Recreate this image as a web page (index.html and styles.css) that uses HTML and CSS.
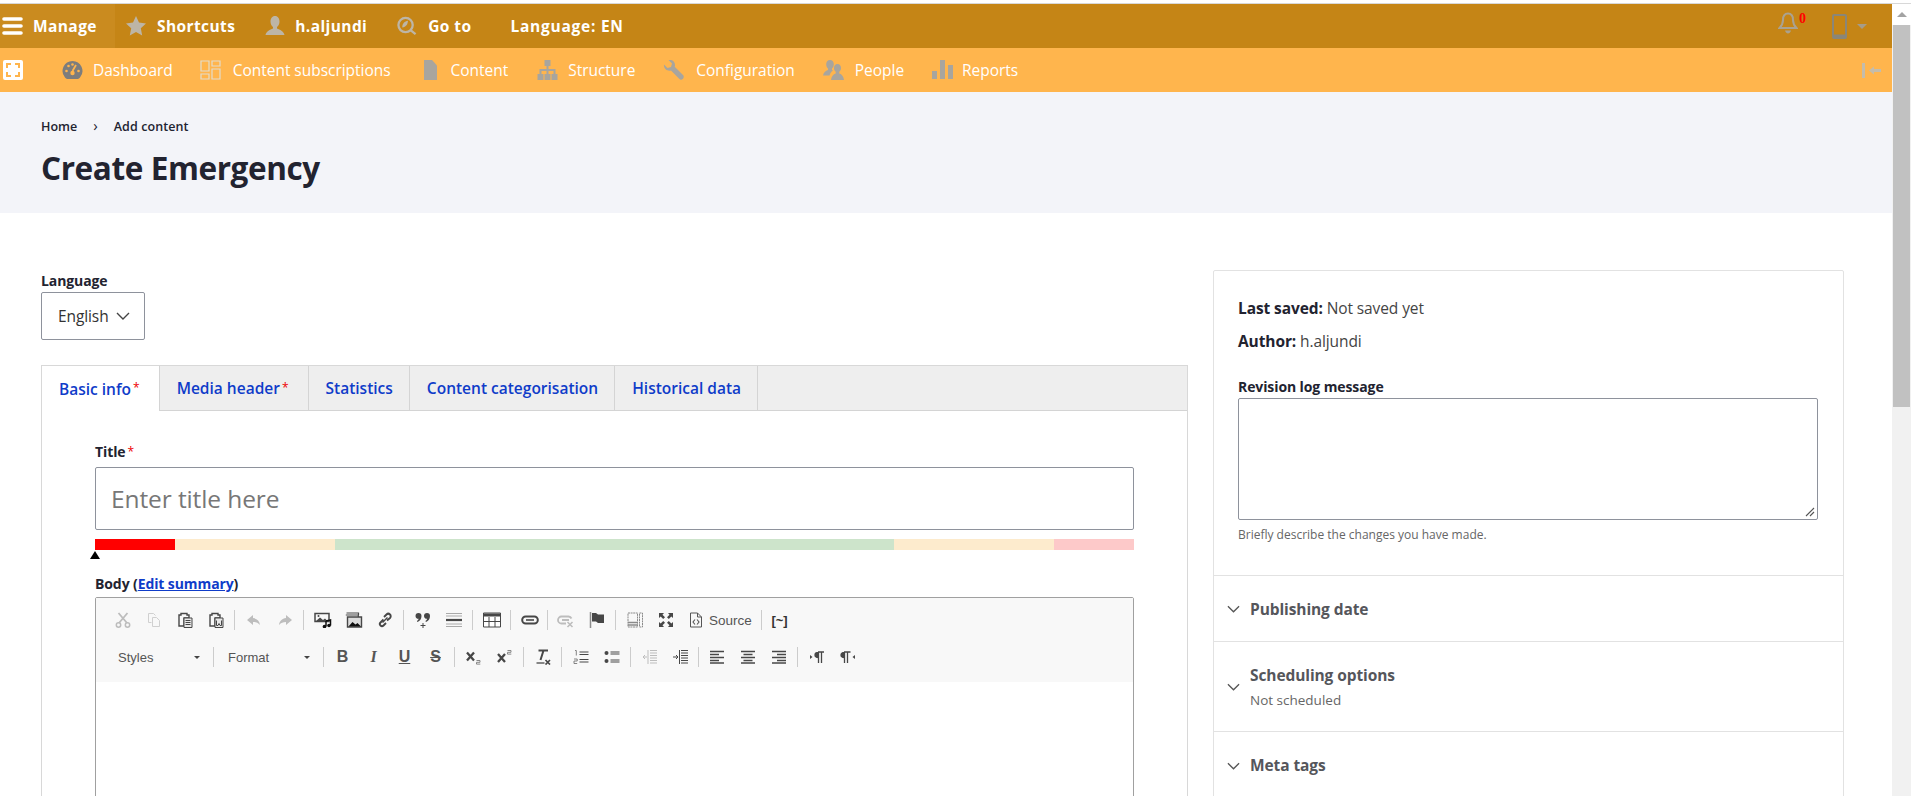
FILE: index.html
```html
<!DOCTYPE html>
<html lang="en">
<head>
<meta charset="utf-8">
<title>Create Emergency</title>
<link rel="stylesheet" href="styles.css">
</head>
<body>
<svg class="sprite" xmlns="http://www.w3.org/2000/svg">
  <symbol id="i-cut" viewBox="0 0 16 16"><path d="M3.5 1 12 11M12.500 1 4 11" fill="none" stroke="currentColor" stroke-width="1.800"/><circle cx="3.500" cy="13" r="2.200" fill="none" stroke="currentColor" stroke-width="1.500"/><circle cx="12.500" cy="13" r="2.200" fill="none" stroke="currentColor" stroke-width="1.500"/></symbol>
  <symbol id="i-copy" viewBox="0 0 16 16"><path d="M2.500 1.500h5l2 2M2.500 1.500v9h3M6.500 5.500h4l3 3v6h-7z" fill="none" stroke="currentColor" stroke-width="1"/></symbol>
  <symbol id="i-paste" viewBox="0 0 16 16"><path d="M2 3h2V1.500h6V3h2v3H7v8H2z" fill="none" stroke="currentColor" stroke-width="1.400"/><path d="M7 6h8v9.500H7z" fill="#e8e8e8" stroke="currentColor" stroke-width="1"/><path d="M8.500 8.500h5M8.500 10.500h5M8.500 12.500h5" stroke="currentColor" stroke-width="1"/></symbol>
  <symbol id="i-word" viewBox="0 0 16 16"><path d="M2 3h2V1.500h6V3h2v3H7v8H2z" fill="none" stroke="currentColor" stroke-width="1.400"/><path d="M7 6h8v9.500H7z" fill="#e8e8e8" stroke="currentColor" stroke-width="1"/><path d="M8.500 8.500v5h1.500l1-2 1 2h1.500v-5" fill="none" stroke="currentColor" stroke-width="1"/></symbol>
  <symbol id="i-undo" viewBox="0 0 16 16"><path d="M7 3 1 8l6 5v-3c3 0 5 .8 7 3-.5-4-3-6.500-7-7z" fill="currentColor"/></symbol>
  <symbol id="i-redo" viewBox="0 0 16 16"><path d="M9 3l6 5-6 5v-3c-3 0-5 .8-7 3 .5-4 3-6.500 7-7z" fill="currentColor"/></symbol>
  <symbol id="i-media" viewBox="0 0 18 16"><path d="M1 1.500h14v8H1z" fill="none" stroke="currentColor" stroke-width="1.500"/><path d="M2 9l4-3.500L9 8l2-1.500 3 3z" fill="currentColor"/><circle cx="4.500" cy="4" r="1" fill="currentColor"/><path d="M12 9v5.500M12 9l4.500-1v5.500" fill="none" stroke="#111" stroke-width="1.500"/><circle cx="10.500" cy="14.500" r="1.800" fill="#111"/><circle cx="15" cy="13.500" r="1.800" fill="#111"/></symbol>
  <symbol id="i-gallery" viewBox="0 0 18 16"><path d="M1.500 1h12v2M.8 3h12.500v2" fill="none" stroke="currentColor" stroke-width="1.200"/><path d="M2.500 5h14v10h-14z" fill="#ddd" stroke="currentColor" stroke-width="1.400"/><path d="M3.500 14.500l4-4.500 3 2.500 2-1.500 3.500 3.500z" fill="#111"/></symbol>
  <symbol id="i-chain" viewBox="0 0 16 16"><path d="M6.500 7.500 3.500 10.500a2.100 2.100 0 0 0 3 3L9 11M7 5l2.500-2.500a2.100 2.100 0 0 1 3.500 3.500L10 8.500" fill="none" stroke="currentColor" stroke-width="1.900"/><path d="M5.500 10.500 10.500 5.500" stroke="currentColor" stroke-width="1.500"/></symbol>
  <symbol id="i-quote" viewBox="0 0 16 16"><path d="M.5 4a3 3 0 1 1 6 0c0 3-1.500 5-4 6l-.6-1c1-.6 1.600-1.500 1.700-2.200A3 3 0 0 1 .5 4zM9 4a3 3 0 1 1 6 0c0 3-1.500 5-4 6l-.6-1c1-.6 1.600-1.500 1.700-2.200A3 3 0 0 1 9 4z" fill="currentColor"/><path d="M8 11v5M5.500 13.500h5" stroke="currentColor" stroke-width="1"/></symbol>
  <symbol id="i-hr" viewBox="0 0 16 16"><path d="M0 1.500h16M0 4h16M0 12h16M0 14.500h16" stroke="#aaa" stroke-width="1.200"/><path d="M0 8h16" stroke="currentColor" stroke-width="2.200"/></symbol>
  <symbol id="i-table" viewBox="0 0 18 16"><path d="M.5 1h17v14H.5z" fill="#fff" stroke="currentColor" stroke-width="1"/><path d="M.5 1.500h17v3H.5z" fill="currentColor"/><path d="M.5 9.500h17M6 5v10M12 5v10" stroke="currentColor" stroke-width="1"/></symbol>
  <symbol id="i-link" viewBox="0 0 18 16"><rect x="1.200" y="4.500" width="15.600" height="7" rx="3.500" fill="none" stroke="currentColor" stroke-width="2"/><path d="M5 8h8" stroke="currentColor" stroke-width="1.600"/></symbol>
  <symbol id="i-unlink" viewBox="0 0 18 16"><path d="M9 11.500H4.500a3.500 3.500 0 0 1 0-7h7a3.500 3.500 0 0 1 3 2M5 8h7" fill="none" stroke="currentColor" stroke-width="1.800"/><path d="M10.500 10l5 5M15.500 10l-5 5" stroke="currentColor" stroke-width="1.600"/></symbol>
  <symbol id="i-flag" viewBox="0 0 16 16"><path d="M1.500 0v16" stroke="currentColor" stroke-width="1.500" opacity=".6"/><path d="M3 1h4l2 1.500h6V11H9l-2-1.500H3z" fill="currentColor"/></symbol>
  <symbol id="i-tpl" viewBox="0 0 16 16"><path d="M1 1h9.500v14H1zM12.500 1h3v14h-3z" fill="none" stroke="currentColor" stroke-width="1" stroke-dasharray="2 .6"/><path d="M1 10.500h9.500M1 13h9.500" stroke="currentColor" stroke-width="1.300"/></symbol>
  <symbol id="i-max" viewBox="0 0 16 16"><path d="M1 1h5L4.500 2.700 7 5.200 5.200 7 2.700 4.500 1 6zM15 1v5l-1.700-1.500L10.800 7 9 5.200l2.500-2.500L10 1zM1 15v-5l1.700 1.500L5.200 9 7 10.800l-2.500 2.500L6 15zM15 15h-5l1.500-1.700L9 10.800 10.800 9l2.500 2.500L15 10z" fill="currentColor"/></symbol>
  <symbol id="i-src" viewBox="0 0 16 16"><path d="M2.500 1h7l4 4v10h-11zM9.500 1v4h4" fill="none" stroke="currentColor" stroke-width="1"/><path d="M7 7.500 5 10l2 2.500M9 7.500l2 2.500-2 2.500" fill="none" stroke="currentColor" stroke-width="1.100"/></symbol>
  <symbol id="i-sub" viewBox="0 0 16 16"><path d="M1 3.500l7 8M8 3.500l-7 8" stroke="currentColor" stroke-width="2.300"/><path d="M10.500 11.500h3.500v1.800h-3.500v1.800h3.800" fill="none" stroke="#888" stroke-width="1"/></symbol>
  <symbol id="i-sup" viewBox="0 0 16 16"><path d="M1 5l7 8M8 5l-7 8" stroke="currentColor" stroke-width="2.300"/><path d="M10.500 1.500h3.500v1.800h-3.500v1.800h3.800" fill="none" stroke="#888" stroke-width="1"/></symbol>
  <symbol id="i-clear" viewBox="0 0 16 16"><path d="M3.500 1.500H13M8.500 1.500 5.500 11" stroke="currentColor" stroke-width="2" fill="none"/><path d="M1.500 14h8" stroke="currentColor" stroke-width="1.300"/><path d="M10.500 11l4.500 4.500M15 11l-4.500 4.500" stroke="currentColor" stroke-width="1.700"/></symbol>
  <symbol id="i-ol" viewBox="0 0 16 16"><path d="M6.500 3h9M6.500 5.500h9M6.500 10.500h9M6.500 13h9" stroke="currentColor" stroke-width="1.100"/><path d="M2 1.500h1.300v5M1 10h3.200v2H1v2.500h3.200" fill="none" stroke="#777" stroke-width=".9"/></symbol>
  <symbol id="i-ul" viewBox="0 0 16 16"><circle cx="2.500" cy="4" r="2" fill="currentColor"/><circle cx="2.500" cy="12" r="2" fill="currentColor"/><path d="M6.500 3h9M6.500 5h9M6.500 11h9M6.500 13h9" stroke="currentColor" stroke-width="1"/></symbol>
  <symbol id="i-out" viewBox="0 0 16 16"><path d="M8 1.500h7M8 4h7M8 6.500h7M8 9h7M8 11.500h7M8 14h7" stroke="currentColor" stroke-width="1"/><path d="M6 1v14" stroke="currentColor" stroke-width="1"/><path d="M5 8H1M3 6 1 8l2 2" fill="none" stroke="currentColor" stroke-width="1"/></symbol>
  <symbol id="i-in" viewBox="0 0 16 16"><path d="M8 1.500h7M8 4h7M8 6.500h7M8 9h7M8 11.500h7M8 14h7" stroke="currentColor" stroke-width="1"/><path d="M6.500 1v14" stroke="currentColor" stroke-width="1"/><path d="M0 8h5M3 6l2 2-2 2" fill="none" stroke="currentColor" stroke-width="1"/></symbol>
  <symbol id="i-left" viewBox="0 0 16 16"><path d="M1 2.500h14M1 5.500h9M1 8.500h14M1 11.500h9M1 14h14" stroke="currentColor" stroke-width="1.500"/></symbol>
  <symbol id="i-center" viewBox="0 0 16 16"><path d="M1 2.500h14M3.500 5.500h9M1 8.500h14M3.500 11.500h9M1 14h14" stroke="currentColor" stroke-width="1.500"/></symbol>
  <symbol id="i-right" viewBox="0 0 16 16"><path d="M1 2.500h14M6 5.500h9M1 8.500h14M6 11.500h9M1 14h14" stroke="currentColor" stroke-width="1.500"/></symbol>
  <symbol id="i-ltr" viewBox="0 0 16 16"><path d="M1 6v4l2.500-2z" fill="currentColor"/><path d="M9 3h6M9.500 3.500C7 3.500 6 4.500 6 6s1 2.500 3.500 2.500zM9.500 3v11M12.500 3v11" fill="currentColor" stroke="currentColor" stroke-width="1.300"/></symbol>
  <symbol id="i-rtl" viewBox="0 0 16 16"><path d="M15 6v4l-2.500-2z" fill="currentColor"/><path d="M4 3h6.500M4.500 3.500C2 3.500 1 4.500 1 6s1 2.500 3.500 2.500zM4.500 3v11M7.500 3v11" fill="currentColor" stroke="currentColor" stroke-width="1.300"/></symbol>
  <symbol id="i-chev" viewBox="0 0 14 8"><path d="M1 1l6 6 6-6" fill="none" stroke="currentColor" stroke-width="1.400"/></symbol>
</svg>

<div class="frame">
  <div class="page">
    <nav class="bar bar-top">
      <a class="top-item top-manage">
        <svg class="ico-burger" viewBox="0 0 21 18"><path d="M2 2h17M2 9h17M2 16h17" stroke="#fff" stroke-width="3.600" stroke-linecap="round"/></svg>
        <span>Manage</span>
      </a>
      <a class="top-item top-short">
        <svg class="ico20" viewBox="0 0 20 20"><path d="M10 0l3 6.600 7 .8-5.200 4.800L16.200 19.500 10 16l-6.200 3.500 1.400-7.300L0 7.400l7-.8z" fill="#bdb5a6"/></svg>
        <span>Shortcuts</span>
      </a>
      <a class="top-item top-user">
        <svg class="ico20" viewBox="0 0 20 20"><path d="M10 0c3 0 4.500 2.500 4.500 5.500 0 2.500-1 4.500-2.500 5.500v1.500c3 1 6.500 2.500 7.500 6.500H.5c1-4 4.500-5.500 7.500-6.500V11C6.500 10 5.500 8 5.500 5.500 5.500 2.500 7 0 10 0z" fill="#bdb5a6"/></svg>
        <span>h.aljundi</span>
      </a>
      <a class="top-item top-goto">
        <svg class="ico20" viewBox="0 0 21 20"><circle cx="9" cy="9" r="7.500" fill="none" stroke="#bdb5a6" stroke-width="2.400"/><path d="M5.500 11.500c0-4 2.500-6.500 6-7-.2 4-2 6.500-6 7z" fill="#bdb5a6"/><path d="M14.500 14.500l5 4" stroke="#bdb5a6" stroke-width="2.400"/></svg>
        <span>Go to</span>
      </a>
      <a class="top-item top-lang"><span>Language: EN</span></a>
      <div class="top-right">
        <svg class="ico-bell" viewBox="0 0 20 22"><path d="M10 1.500c-3.500 0-5 2.500-5 6.500 0 4-1.500 6-3.500 8h17c-2-2-3.500-4-3.500-8 0-4-1.500-6.500-5-6.500z" fill="none" stroke="#aaa290" stroke-width="2"/><path d="M7 18.500h6c-.5 2-1.800 3-3 3s-2.500-1-3-3z" fill="#aaa290"/></svg>
        <span class="badge">0</span>
        <svg class="ico-phone" viewBox="0 0 15 25"><rect x="1" y="1" width="13" height="23" rx="1" fill="none" stroke="#8a8678" stroke-width="2"/><rect x="1" y="20.500" width="13" height="4" fill="#8a8678"/></svg>
        <span class="caret-down"></span>
      </div>
    </nav>

    <nav class="bar bar-sub">
      <svg class="ico-home" viewBox="0 0 20 20"><rect width="20" height="20" rx="2" fill="#fff"/><path d="M4 8V4h4M12 4h4v4M16 12v4h-4M8 16H4v-4" fill="none" stroke="#ffb54d" stroke-width="2"/></svg>
      <a class="sub-item sub-dash">
        <svg class="ico-w21" viewBox="0 0 21 20"><path d="M10.500 1a10 10 0 0 0-7.500 16.500c1 1.200 2 1.500 3 1.500h9c1 0 2-.3 3-1.500A10 10 0 0 0 10.500 1z" fill="#7d7d7d"/><path d="M10.500 11 14 5" stroke="#ffb54d" stroke-width="1.800"/><circle cx="10.500" cy="13" r="2.200" fill="#ffb54d"/><circle cx="4.500" cy="11" r="1.300" fill="#ffb54d"/><circle cx="6.500" cy="6" r="1.300" fill="#ffb54d"/><circle cx="10.500" cy="4.500" r="1.300" fill="#ffb54d"/><circle cx="16.500" cy="11" r="1.300" fill="#ffb54d"/></svg>
        <span>Dashboard</span>
      </a>
      <a class="sub-item sub-subs">
        <svg class="ico-w21" viewBox="0 0 21 20"><path d="M1 1h8v10H1zM12 1h8v5h-8zM1 14h8v5H1zM12 9h8v10h-8z" fill="none" stroke="#e3dccb" stroke-width="1.200"/></svg>
        <span>Content subscriptions</span>
      </a>
      <a class="sub-item sub-content">
        <svg class="ico-w13" viewBox="0 0 13 20"><path d="M0 0h8l5 5.500V20H0z" fill="#a8a59e"/></svg>
        <span>Content</span>
      </a>
      <a class="sub-item sub-struct">
        <svg class="ico-w21" viewBox="0 0 21 20"><path d="M7.500 0h6v6h-2v3h7v5h2v6h-6v-6h2v-3h-5v3h2v6h-6v-6h2v-3h-5v3h2v6h-6v-6h2V9h7V6h-2z" fill="#a8a59e"/></svg>
        <span>Structure</span>
      </a>
      <a class="sub-item sub-conf">
        <svg class="ico-w21" viewBox="0 0 21 20"><path d="M1 4.500 4.500 8 8 7l1-3.500L5.500 0C9-.7 12 1.500 12 5c0 .7-.1 1.300-.3 1.800L20 15c1 1 1 2.500 0 3.800-1.200 1.200-2.800 1.200-3.800 0L8 10.500c-3.500 1-7.500-1.500-7-6z" fill="#a8a59e"/></svg>
        <span>Configuration</span>
      </a>
      <a class="sub-item sub-people">
        <svg class="ico-w21" viewBox="0 0 21 20"><path d="M7 0c2.500 0 3.800 2 3.800 4.300 0 1.800-.7 3.300-1.800 4.200v1.500l1 .5c-1.800 1.300-3 3.200-3.500 5H0c.5-3 2.500-4.500 5-5.500V8.500C3.900 7.600 3.200 6.100 3.200 4.300 3.200 2 4.500 0 7 0z" fill="#a8a59e"/><path d="M14.500 4c2.300 0 3.500 2 3.500 4 0 1.700-.7 3-1.700 3.800v1.700c2.500.8 4.200 2.800 4.700 6.500H8c.5-3.700 2.200-5.700 4.700-6.500v-1.700C11.700 11 11 9.700 11 8c0-2 1.200-4 3.500-4z" fill="#a8a59e"/></svg>
        <span>People</span>
      </a>
      <a class="sub-item sub-rep">
        <svg class="ico-w21" viewBox="0 0 21 20"><path d="M0 11h5v8H0zM8 0h5v19H8zM16 5h5v14h-5z" fill="#a8a59e"/></svg>
        <span>Reports</span>
      </a>
      <svg class="ico-collapse" viewBox="0 0 20 15"><rect width="3" height="15" fill="#c4bcab"/><path d="M7 7.500l5-4v2.500h7v3h-7v2.500z" fill="#c4bcab"/></svg>
    </nav>

    <header class="head">
      <ol class="crumbs">
        <li>Home</li>
        <li class="crumb-sep">›</li>
        <li>Add content</li>
      </ol>
      <h1 class="title">Create Emergency</h1>
    </header>

    <main class="layout">
      <section class="col-main">
        <label class="lbl lbl-lang">Language</label>
        <div class="select"><span>English</span><svg class="chev"><use href="#i-chev"/></svg></div>

        <div class="tabs-box">
          <ul class="tabs">
            <li class="tab tab-on">Basic info<b class="req">*</b></li>
            <li class="tab">Media header<b class="req">*</b></li>
            <li class="tab">Statistics</li>
            <li class="tab">Content categorisation</li>
            <li class="tab">Historical data</li>
          </ul>
          <div class="tab-body">
            <label class="lbl">Title<b class="req">*</b></label>
            <div class="title-input">Enter title here</div>
            <div class="meter">
              <i class="m m-red"></i><i class="m m-peach"></i><i class="m m-green"></i><i class="m m-peach"></i><i class="m m-pink"></i>
            </div>
            <div class="meter-mark"></div>
            <label class="lbl lbl-body">Body (<a class="lnk">Edit summary</a>)</label>
            <div class="editor">
              <div class="ed-tools">
                <div class="ed-row">
                  <span class="btn off"><svg><use href="#i-cut"/></svg></span>
                  <span class="btn off2"><svg><use href="#i-copy"/></svg></span>
                  <span class="btn"><svg><use href="#i-paste"/></svg></span>
                  <span class="btn"><svg><use href="#i-word"/></svg></span>
                  <span class="sep"></span>
                  <span class="btn off"><svg><use href="#i-undo"/></svg></span>
                  <span class="btn off"><svg><use href="#i-redo"/></svg></span>
                  <span class="sep"></span>
                  <span class="btn"><svg class="w18"><use href="#i-media"/></svg></span>
                  <span class="btn"><svg class="w18"><use href="#i-gallery"/></svg></span>
                  <span class="btn"><svg><use href="#i-chain"/></svg></span>
                  <span class="sep"></span>
                  <span class="btn"><svg><use href="#i-quote"/></svg></span>
                  <span class="btn"><svg><use href="#i-hr"/></svg></span>
                  <span class="sep"></span>
                  <span class="btn"><svg class="w18"><use href="#i-table"/></svg></span>
                  <span class="sep"></span>
                  <span class="btn"><svg class="w18"><use href="#i-link"/></svg></span>
                  <span class="sep sep-tight"></span>
                  <span class="btn off"><svg class="w18"><use href="#i-unlink"/></svg></span>
                  <span class="btn"><svg><use href="#i-flag"/></svg></span>
                  <span class="sep"></span>
                  <span class="btn btn-muted"><svg><use href="#i-tpl"/></svg></span>
                  <span class="btn"><svg><use href="#i-max"/></svg></span>
                  <span class="btn btn-src"><svg><use href="#i-src"/></svg><em>Source</em></span>
                  <span class="sep"></span>
                  <span class="btn btn-tilde">[~]</span>
                </div>
                <div class="ed-row">
                  <span class="combo"><em>Styles</em><i class="combo-caret"></i></span>
                  <span class="sep"></span>
                  <span class="combo"><em>Format</em><i class="combo-caret"></i></span>
                  <span class="sep"></span>
                  <span class="btn fmt fmt-b">B</span>
                  <span class="btn fmt fmt-i">I</span>
                  <span class="btn fmt fmt-u">U</span>
                  <span class="btn fmt fmt-s">S</span>
                  <span class="sep"></span>
                  <span class="btn"><svg><use href="#i-sub"/></svg></span>
                  <span class="btn"><svg><use href="#i-sup"/></svg></span>
                  <span class="sep"></span>
                  <span class="btn"><svg><use href="#i-clear"/></svg></span>
                  <span class="sep"></span>
                  <span class="btn"><svg><use href="#i-ol"/></svg></span>
                  <span class="btn"><svg><use href="#i-ul"/></svg></span>
                  <span class="sep"></span>
                  <span class="btn off"><svg><use href="#i-out"/></svg></span>
                  <span class="btn"><svg><use href="#i-in"/></svg></span>
                  <span class="sep sep-tight"></span>
                  <span class="btn"><svg><use href="#i-left"/></svg></span>
                  <span class="btn"><svg><use href="#i-center"/></svg></span>
                  <span class="btn"><svg><use href="#i-right"/></svg></span>
                  <span class="sep"></span>
                  <span class="btn"><svg><use href="#i-ltr"/></svg></span>
                  <span class="btn"><svg><use href="#i-rtl"/></svg></span>
                </div>
              </div>
              <div class="ed-area"></div>
            </div>
          </div>
        </div>
      </section>

      <aside class="col-side">
        <div class="side-top">
          <p class="meta"><b>Last saved:</b> Not saved yet</p>
          <p class="meta meta-2"><b>Author:</b> h.aljundi</p>
          <label class="lbl lbl-rev">Revision log message</label>
          <div class="rev-box">
            <svg class="grip" viewBox="0 0 10 10"><path d="M1 9 9 1M5 9l4-4" stroke="#555" stroke-width="1.100"/></svg>
          </div>
          <p class="help">Briefly describe the changes you have made.</p>
        </div>
        <div class="acc acc-1"><svg class="chev chev-acc"><use href="#i-chev"/></svg><div><h3>Publishing date</h3></div></div>
        <div class="acc acc-2"><svg class="chev chev-acc"><use href="#i-chev"/></svg><div><h3>Scheduling options</h3><p>Not scheduled</p></div></div>
        <div class="acc acc-3"><svg class="chev chev-acc"><use href="#i-chev"/></svg><div><h3>Meta tags</h3></div></div>
      </aside>
    </main>
  </div>

  <div class="scroll">
    <div class="scroll-btn"><span class="scroll-up"></span></div>
    <div class="scroll-thumb"></div>
  </div>
</div>
</body>
</html>
```
FILE: styles.css
```css
* { box-sizing: border-box; }
html, body { margin: 0; height: 100%; overflow: hidden; }
body {
  background: #fff;
  font-family: "Open Sans", "Noto Sans", sans-serif;
  color: #222330;
  padding-top: 3px;
}
.sprite { display: none; }
svg { display: block; flex: none; }
ul, ol { list-style: none; margin: 0; padding: 0; }
p, h1, h3 { margin: 0; }
em { font-style: normal; }

.frame { display: flex; height: 793px; border-top: 1px solid #d8d8d8; overflow: hidden; }
.page { flex: 1; min-width: 0; overflow: hidden; }

/* Scrollbar */
.scroll { width: 19px; background: #f1f1f1; display: flex; flex-direction: column; align-items: flex-end; }
.scroll-btn { width: 19px; height: 21px; background: #fff; display: flex; align-items: center; justify-content: center; }
.scroll-up { width: 0; height: 0; border: 5px solid transparent; border-top: 0; border-bottom: 5px solid #a3a3a3; }
.scroll-thumb { width: 17px; margin-right: 1px; height: 382px; background: #c1c1c1; }

/* Admin bars */
.bar { display: flex; align-items: center; height: 44px; position: relative; }
.bar-top { background: #c58516; color: #fff; font-weight: 700; font-size: 15.500px; letter-spacing: .4px; }
.bar-sub { background: #ffb54d; color: #fff; font-size: 15.500px; letter-spacing: -.03px; }
.top-item, .sub-item { display: flex; align-items: center; white-space: nowrap; }
.top-manage { background: #ca8b1f; width: 115px; height: 44px; padding-left: 2px; gap: 10px; }
.ico-burger { width: 21px; height: 18px; }
.ico20 { width: 20px; height: 20px; }
.top-short { margin-left: 11px; gap: 11px; }
.top-user { margin-left: 30px; gap: 10px; }
.top-goto { margin-left: 30px; gap: 11px; }
.top-lang { margin-left: 39px; letter-spacing: .75px; }
.top-right { margin-left: auto; display: flex; align-items: flex-start; height: 44px; padding: 8px 25px 0 0; }
.ico-bell { width: 20px; height: 22px; }
.badge { font-family: "Liberation Serif", serif; font-weight: 700; font-size: 14px; line-height: 14px; color: #f00; margin-left: 1px; width: 9px; letter-spacing: 0; }
.ico-phone { width: 15px; height: 25px; margin: 2px 0 0 24px; }
.caret-down { width: 0; height: 0; margin: 12px 0 0 10px; border: 5px solid transparent; border-bottom: 0; border-top: 5px solid #a59c8a; }

.ico-home { width: 20px; height: 20px; margin-left: 3px; }
.ico-w21 { width: 21px; height: 20px; }
.ico-w13 { width: 13px; height: 20px; }
.sub-item { gap: 10px; }
.sub-dash { margin-left: 39px; }
.sub-subs { margin-left: 27px; gap: 12px; }
.sub-content { margin-left: 33px; gap: 14px; }
.sub-struct { margin-left: 29px; }
.sub-conf { margin-left: 28px; gap: 12px; }
.sub-people { margin-left: 28px; gap: 11px; }
.sub-rep { margin-left: 28px; gap: 9px; }
.ico-collapse { width: 20px; height: 15px; margin: 0 10px 0 auto; }

/* Page header */
.head { background: #f3f4f9; height: 121px; padding: 27px 41px 0; }
.crumbs { display: flex; font-size: 12.500px; font-weight: 600; line-height: 16px; color: #222330; }
.crumb-sep { margin: -2px 16px 0; font-size: 15px; font-weight: 400; }
.crumbs li:last-child { letter-spacing: .1px; }
.title { margin-top: 11px; font-size: 31.500px; line-height: 44px; font-weight: 700; letter-spacing: -.4px; color: #222330; }

/* Layout */
.layout { display: flex; align-items: flex-start; padding: 57px 48px 0 41px; }
.col-main { width: 1147px; flex: none; }
.col-side { margin-left: 25px; width: 631px; flex: none; border: 1px solid #e2e2e2; border-radius: 2px; }

.lbl { display: block; font-size: 14px; line-height: 16px; font-weight: 700; color: #222330; letter-spacing: -.1px; }
.req { color: #e00; font-weight: 400; font-size: 12px; margin: 0 3px 0 2px; position: relative; top: -1px; }
.lbl .req { margin-right: 0; }
.lbl-lang { margin-top: 3px; }
.select { width: 104px; height: 48px; margin-top: 3px; border: 1px solid #8e929c; border-radius: 2px; display: flex; align-items: center; padding-left: 16px; font-size: 15.500px; color: #333; letter-spacing: -.1px; }
.chev { width: 14px; height: 8px; color: #444; }
.select .chev { margin-left: 7px; }

.tabs-box { margin-top: 25px; border: 1px solid #d8d8d8; border-bottom: 0; }
.tabs { display: flex; background: #eee; height: 45px; border-bottom: 1px solid #d4d4d4; }
.tab { height: 44px; padding: 0 16px 0 17px; display: flex; align-items: center; font-size: 15.500px; font-weight: 600; color: #0f3cc9; border-right: 1px solid #d4d4d4; white-space: nowrap; }
.tab-on { background: #fff; height: 45px; }
.tab-body { padding: 33px 53px 0; background: #fff; }
.title-input { height: 63px; margin-top: 6px; padding-left: 15px; border: 1px solid #8e929c; border-radius: 2px; display: flex; align-items: center; font-size: 24.500px; color: #777; letter-spacing: -.1px; }
.meter { display: flex; height: 11px; margin-top: 9px; }
.m { display: block; }
.m-red { width: 80px; background: #f00; }
.m-peach { width: 160px; background: #fdebcd; }
.m-green { width: 559px; background: #cde4cb; }
.m-pink { flex: 1; background: #fdc9c9; }
.meter-mark { width: 0; height: 0; margin: 1px 0 0 -5px; border: 5px solid transparent; border-top: 0; border-bottom: 8px solid #000; }
.lbl-body { margin-top: 17px; }
.lnk { color: #0f3cc9; text-decoration: underline; }

/* Editor */
.editor { margin-top: 5px; height: 400px; border: 1px solid #a0a0a0; border-radius: 2px 2px 0 0; }
.ed-tools { height: 84px; background: #f8f8f8; padding: 7px 0 0 11px; }
.ed-row { display: flex; align-items: center; height: 30px; margin-bottom: 7px; color: #474747; }
.btn { width: 31px; height: 30px; flex: none; display: flex; align-items: center; justify-content: center; }
.btn svg { width: 16px; height: 16px; }
.btn svg.w18 { width: 18px; }
.off { color: #bdbdbd; }
.off2 { color: #d0d0d0; }
.btn-muted { color: #8a8a8a; }
.sep { width: 7px; height: 20px; flex: none; background: linear-gradient(#ccc, #ccc) no-repeat 3px 0 / 1px 100%; }
.sep-tight { width: 5px; background-position: 2px 0; }
.btn-src { width: 77px; gap: 5px; justify-content: flex-start; padding-left: 7px; font-family: "Liberation Sans", sans-serif; font-size: 13.500px; color: #555; }
.btn-tilde { font-family: "Liberation Sans", sans-serif; font-size: 13px; font-weight: 700; color: #333; margin-left: -1px; }
.combo { width: 103px; height: 30px; flex: none; display: flex; align-items: center; justify-content: space-between; padding: 0 10px 0 11px; font-family: "Liberation Sans", sans-serif; font-size: 13px; color: #555; }
.combo-caret { width: 0; height: 0; border: 3px solid transparent; border-bottom: 0; border-top: 3px solid #444; }
.fmt { font-family: "Liberation Sans", sans-serif; font-size: 16px; font-weight: 700; color: #555; }
.fmt-i { font-style: italic; font-family: "Liberation Serif", serif; }
.fmt-u { text-decoration: underline; }
.fmt-s { text-decoration: line-through; }
.ed-area { height: 300px; background: #fff; }

/* Sidebar */
.side-top { padding: 27px 24px 0; height: 305px; border-bottom: 1px solid #e2e2e2; }
.meta { font-size: 15.500px; line-height: 20px; color: #444; letter-spacing: -.1px; }
.meta b { color: #222330; font-weight: 700; }
.meta-2 { margin-top: 13px; }
.lbl-rev { margin-top: 28px; }
.rev-box { margin-top: 3px; width: 580px; height: 122px; border: 1px solid #8e929c; border-radius: 2px; display: flex; align-items: flex-end; justify-content: flex-end; padding: 0 2px 2px 0; }
.grip { width: 10px; height: 10px; }
.help { margin-top: 7px; font-size: 12px; line-height: 16px; color: #666; }

.acc { display: flex; align-items: center; gap: 10px; padding-left: 13px; border-bottom: 1px solid #e2e2e2; }
.acc-1 { height: 66px; }
.acc-2 { height: 90px; }
.acc-3 { height: 160px; border-bottom: 0; align-items: flex-start; padding-top: 23px; }
.chev-acc { width: 13px; color: #555; }
.acc-3 .chev-acc { margin-top: 7px; }
.acc h3 { font-size: 15.500px; line-height: 20px; font-weight: 700; color: #55565b; letter-spacing: -.1px; }
.acc p { font-size: 13.500px; line-height: 16px; margin-top: 7px; color: #666; }
```
